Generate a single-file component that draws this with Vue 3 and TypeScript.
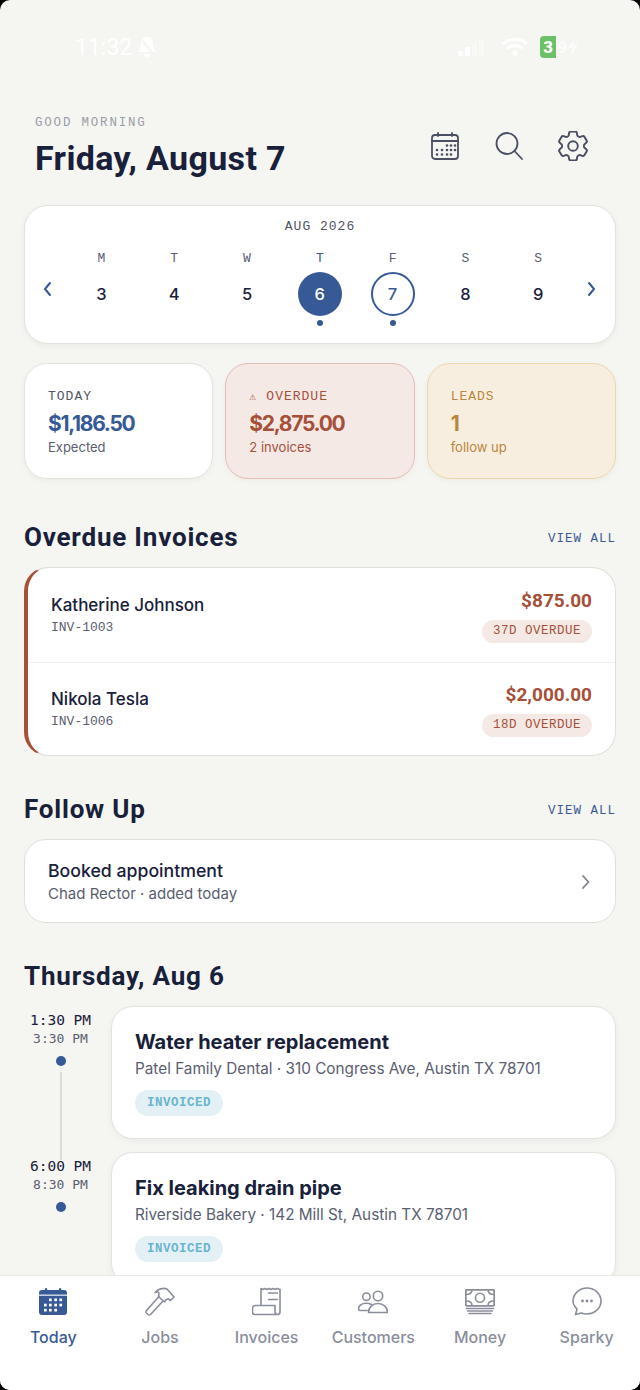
<template>
  <div class="app">
    <main class="main">
      <div class="status">
        <div class="status__left">
          <span class="status__time">11:32</span>
          <svg width="22" height="24" viewBox="0 0 22 24" fill="#fff"><path d="M11 2c-4 0-6 3-6 7 0 4-2 6-3 8h18c-1-2-3-4-3-8 0-4-2-7-6-7zM8 19a3 3 0 0 0 6 0z" /><path d="M3 2l17 20" stroke="#f5f5f1" stroke-width="2" /></svg>
        </div>
        <div class="status__right">
          <span class="signal"><i style="height: 5px"></i><i style="height: 9px"></i><i class="signal__off" style="height: 13px"></i><i class="signal__off" style="height: 17px"></i></span>
          <svg width="28" height="20" viewBox="0 0 28 20" fill="none" stroke="#fff" stroke-width="3"><path d="M2 7c7-6 17-6 24 0M6.500 11.500c4.500-4 10.500-4 15 0" /><circle cx="14" cy="16" r="2.500" fill="#fff" stroke="none" /></svg>
          <span class="battery">
            <b>3</b><span>9</span>
            <svg width="10" height="16" viewBox="0 0 10 16" fill="#fff" opacity="0.7"><path d="M6 0L0 9h4l-1 7 7-10H5.500z" /></svg>
          </span>
        </div>
      </div>

      <header class="top">
        <div>
          <div class="top__hello">GOOD MORNING</div>
          <h1 class="top__date">Friday, August 7</h1>
        </div>
        <div class="top__icons">
          <svg width="30" height="30" viewBox="0 0 30 30" fill="none" stroke="#4a4f63" stroke-width="1.800" stroke-linecap="round">
            <rect x="2" y="4" width="26" height="24" rx="3" />
            <path d="M2 10h26M8 2v3M22 2v3" />
            <g fill="#4a4f63" stroke="none">
              <circle cx="17" cy="14.500" r="1.300" /><circle cx="21" cy="14.500" r="1.300" /><circle cx="25" cy="14.500" r="1.300" />
              <circle cx="7" cy="19" r="1.300" /><circle cx="12" cy="19" r="1.300" /><circle cx="17" cy="19" r="1.300" /><circle cx="21" cy="19" r="1.300" /><circle cx="25" cy="19" r="1.300" />
              <circle cx="7" cy="23.500" r="1.300" /><circle cx="12" cy="23.500" r="1.300" /><circle cx="17" cy="23.500" r="1.300" /><circle cx="21" cy="23.500" r="1.300" />
            </g>
          </svg>
          <svg width="30" height="30" viewBox="0 0 30 30" fill="none" stroke="#4a4f63" stroke-width="1.800" stroke-linecap="round"><circle cx="13" cy="12.500" r="10.500" /><path d="M20.500 20l7.500 8" /></svg>
          <svg width="30" height="30" viewBox="2.700 2.700 18.600 18.600" fill="none" stroke="#4a4f63" stroke-width="1.200" stroke-linecap="round" stroke-linejoin="round"><path d="M9.594 3.940c.09-.542.560-.94 1.110-.94h2.593c.550 0 1.020.398 1.110.940l.213 1.281c.063.374.313.686.645.870.074.040.147.083.220.127.325.196.720.257 1.075.124l1.217-.456a1.125 1.125 0 0 1 1.370.490l1.296 2.247a1.125 1.125 0 0 1-.260 1.431l-1.003.827c-.293.241-.438.613-.430.992a7.723 7.723 0 0 1 0 .255c-.008.378.137.750.430.991l1.004.827c.424.350.534.955.260 1.430l-1.298 2.247a1.125 1.125 0 0 1-1.369.491l-1.217-.456c-.355-.133-.750-.072-1.076.124a6.470 6.470 0 0 1-.220.128c-.331.183-.581.495-.644.869l-.213 1.281c-.090.543-.560.940-1.110.940h-2.594c-.550 0-1.019-.398-1.110-.940l-.213-1.281c-.062-.374-.312-.686-.644-.870a6.520 6.520 0 0 1-.220-.127c-.325-.196-.720-.257-1.076-.124l-1.217.456a1.125 1.125 0 0 1-1.369-.490l-1.297-2.247a1.125 1.125 0 0 1 .260-1.431l1.004-.827c.292-.240.437-.613.430-.991a6.932 6.932 0 0 1 0-.255c.007-.380-.138-.751-.430-.992l-1.004-.827a1.125 1.125 0 0 1-.260-1.430l1.297-2.247a1.125 1.125 0 0 1 1.370-.491l1.216.456c.356.133.751.072 1.076-.124.072-.044.146-.086.220-.128.332-.183.582-.495.644-.869l.214-1.280Z" /><circle cx="12" cy="12" r="3" /></svg>
        </div>
      </header>

      <section class="cal">
        <div class="cal__month">AUG 2026</div>
        <div class="cal__body">
          <svg class="cal__arrow" width="10" height="16" viewBox="0 0 10 16" fill="none" stroke="#375a96" stroke-width="2" stroke-linecap="round" stroke-linejoin="round"><path d="M8 2L3 8l5 6" /></svg>
          <div class="cal__days">
            <div v-for="day in days" :key="day.num" class="day">
              <span class="day__name" :class="{ 'day__name--on': day.num === 6 }">{{ day.name }}</span>
              <span class="day__num" :class="{ 'day__num--today': day.num === 6, 'day__num--sel': day.num === 7 }">{{ day.num }}</span>
              <i class="day__dot" :class="{ 'day__dot--on': day.dot }"></i>
            </div>
          </div>
          <svg class="cal__arrow" width="10" height="16" viewBox="0 0 10 16" fill="none" stroke="#375a96" stroke-width="2" stroke-linecap="round" stroke-linejoin="round"><path d="M2 2l5 6-5 6" /></svg>
        </div>
      </section>

      <section class="stats">
        <div class="stat">
          <div class="stat__label stat__label--plain">TODAY</div>
          <div class="stat__value stat__value--blue">$1,186.50</div>
          <div class="stat__sub">Expected</div>
        </div>
        <div class="stat stat--red">
          <div class="stat__label"><span class="stat__warn">⚠</span>OVERDUE</div>
          <div class="stat__value">$2,875.00</div>
          <div class="stat__sub">2 invoices</div>
        </div>
        <div class="stat stat--amber">
          <div class="stat__label">LEADS</div>
          <div class="stat__value">1</div>
          <div class="stat__sub">follow up</div>
        </div>
      </section>

      <div class="head head--first">
        <h2>Overdue Invoices</h2>
        <span class="head__link">VIEW ALL</span>
      </div>
      <section class="invoices">
        <div v-for="inv in invoices" :key="inv.id" class="invoice">
          <div>
            <div class="invoice__name">{{ inv.name }}</div>
            <div class="invoice__id">{{ inv.id }}</div>
          </div>
          <div class="invoice__right">
            <div class="invoice__amount">{{ inv.amount }}</div>
            <span class="invoice__chip">{{ inv.late }}</span>
          </div>
        </div>
      </section>

      <div class="head head--follow">
        <h2>Follow Up</h2>
        <span class="head__link">VIEW ALL</span>
      </div>
      <section class="follow">
        <div class="follow__text">
          <div class="follow__title">Booked appointment</div>
          <div class="follow__sub">Chad Rector · added today</div>
        </div>
        <svg class="follow__arrow" width="10" height="16" viewBox="0 0 10 16" fill="none" stroke="#7f8290" stroke-width="1.800" stroke-linecap="round" stroke-linejoin="round"><path d="M2 2l5.500 6L2 14" /></svg>
      </section>

      <div class="head head--day"><h2>Thursday, Aug 6</h2></div>
      <section class="jobs">
        <div v-for="(job, i) in jobs" :key="job.title" class="job">
          <div class="job__time">
            <div class="job__start">{{ job.start }}</div>
            <div class="job__end">{{ job.end }}</div>
            <i class="job__dot"></i>
            <i v-if="i < jobs.length - 1" class="job__line"></i>
          </div>
          <div class="job__card">
            <div class="job__title">{{ job.title }}</div>
            <div class="job__sub">{{ job.place }}</div>
            <span class="job__chip">INVOICED</span>
          </div>
        </div>
      </section>
    </main>

    <nav class="tabs">
      <div v-for="tab in tabs" :key="tab" class="tab" :class="{ 'tab--on': tab === 'Today' }">
        <svg width="30" height="30" viewBox="0 0 30 30" fill="none" stroke="#8a8e9c" stroke-width="1.600" stroke-linecap="round" stroke-linejoin="round">
          <g v-if="tab === 'Today'" stroke="none">
            <rect x="1" y="3" width="28" height="25" rx="3" fill="#375a96" />
            <rect x="7" y="1" width="2.200" height="4.500" rx="1.100" fill="#375a96" />
            <rect x="21" y="1" width="2.200" height="4.500" rx="1.100" fill="#375a96" />
            <rect x="1" y="7.600" width="28" height="1.100" fill="#fff" />
            <g fill="#fff">
              <rect x="11" y="11.500" width="2.700" height="2.700" /><rect x="16.300" y="11.500" width="2.700" height="2.700" /><rect x="21.400" y="11.500" width="2.700" height="2.700" />
              <rect x="6" y="16.700" width="2.700" height="2.700" /><rect x="11" y="16.700" width="2.700" height="2.700" /><rect x="16.300" y="16.700" width="2.700" height="2.700" /><rect x="21.400" y="16.700" width="2.700" height="2.700" />
              <rect x="6" y="21.800" width="2.700" height="2.700" /><rect x="11" y="21.800" width="2.700" height="2.700" /><rect x="16.300" y="21.800" width="2.700" height="2.700" />
            </g>
          </g>
          <g v-else-if="tab === 'Jobs'">
            <path d="M14 9.500L1.500 23.500a2 2 0 0 0 0 2.500L3 27.500a2 2 0 0 0 2.500 0L18 14" />
            <path d="M10 5.500C13 2 18 .5 22 2l7 8-3.500 3.500-2-1.500-2.500.8-1.500 2.200-6-5.500.5-3C14 5 12 4.500 10 5.500z" />
          </g>
          <g v-else-if="tab === 'Invoices'">
            <path d="M9 18.500V1.500l2 1 2-1 2 1 2-1 2 1 2-1 2 1 2-1 3 1V25a2.500 2.500 0 0 1-5 0v-6.500H3.500a3 3 0 0 0-3 3V25A2.500 2.500 0 0 0 3 27.500h23.500" />
            <path d="M16.500 6h9M16.500 12.500h9" />
          </g>
          <g v-else-if="tab === 'Customers'">
            <circle cx="8.400" cy="9.700" r="3.700" />
            <circle cx="20" cy="9" r="4.700" />
            <path d="M13.500 17.500c-1.500-.7-3.500-1.200-5.500-1.200-4 0-7.500 2.500-7.500 5.500 0 1 .7 1.700 1.700 1.700h7" />
            <path d="M10.500 25.500c0-5 4-9 9.500-9s9.500 4 9.500 9z" />
          </g>
          <g v-else-if="tab === 'Money'">
            <rect x="0.800" y="2.800" width="28.400" height="16" rx="1" stroke-width="1.800" />
            <circle cx="15" cy="10.800" r="4.500" />
            <path d="M7 3c0 3-2 4.500-6 4.500M23 3c0 3 2 4.500 6 4.500M7 18.500c0-3-2-4.500-6-4.500M23 18.500c0-3 2-4.500 6-4.500" />
            <path d="M1.500 21.500h27M2.500 24h25M4 26.500h22" />
          </g>
          <g v-else>
            <path d="M15 1c7.700 0 14 5.800 14 13s-6.300 13-14 13c-2 0-4-.4-5.800-1.100L3.500 27.500 5 22C2.500 19.600 1 17 1 14 1 6.800 7.300 1 15 1z" />
            <g fill="#8a8e9c" stroke="none"><circle cx="10.500" cy="14" r="1.400" /><circle cx="15" cy="14" r="1.400" /><circle cx="19.500" cy="14" r="1.400" /></g>
          </g>
        </svg>
        <span>{{ tab }}</span>
      </div>
    </nav>
  </div>
</template>

<script setup lang="ts">
const days = [
  { name: 'M', num: 3, dot: false },
  { name: 'T', num: 4, dot: false },
  { name: 'W', num: 5, dot: false },
  { name: 'T', num: 6, dot: true },
  { name: 'F', num: 7, dot: true },
  { name: 'S', num: 8, dot: false },
  { name: 'S', num: 9, dot: false }
];

const invoices = [
  { name: 'Katherine Johnson', id: 'INV-1003', amount: '$875.00', late: '37D OVERDUE' },
  { name: 'Nikola Tesla', id: 'INV-1006', amount: '$2,000.00', late: '18D OVERDUE' }
];

const jobs = [
  {
    start: '1:30 PM',
    end: '3:30 PM',
    title: 'Water heater replacement',
    place: 'Patel Family Dental · 310 Congress Ave, Austin TX 78701'
  },
  {
    start: '6:00 PM',
    end: '8:30 PM',
    title: 'Fix leaking drain pipe',
    place: 'Riverside Bakery · 142 Mill St, Austin TX 78701'
  }
];

const tabs = ['Today', 'Jobs', 'Invoices', 'Customers', 'Money', 'Sparky'];
</script>

<style>
html,
body {
  margin: 0;
  background: #000;
}
</style>

<style scoped>
.app {
  width: 640px;
  height: 1390px;
  display: flex;
  flex-direction: column;
  overflow: hidden;
  border-radius: 10px;
  background: #f5f5f1;
  color: #18203a;
  font-family: 'Inter', 'Noto Sans', sans-serif;
}

.main {
  flex: 1;
  min-height: 0;
  overflow: hidden;
  padding: 0 24px;
}

.status {
  height: 94px;
  box-sizing: border-box;
  padding: 34px 38px 0 51px;
  display: flex;
  justify-content: space-between;
  align-items: flex-start;
  color: #fff;
  filter: blur(0.7px);
}

.status__left,
.status__right {
  display: flex;
  align-items: center;
  height: 26px;
}

.status__left {
  gap: 4px;
}

.status__right {
  gap: 17px;
}

.status__time {
  font-size: 23px;
  font-family: 'Roboto', sans-serif;
}

.signal {
  display: flex;
  align-items: flex-end;
  gap: 2px;
}

.signal i {
  width: 5px;
  background: #fff;
  border-radius: 1px;
}

.signal .signal__off {
  opacity: 0.4;
}

.battery {
  display: flex;
  align-items: center;
  font: 700 17px 'Roboto', sans-serif;
  margin-left: -6px;
}

.battery b {
  width: 16px;
  height: 22px;
  line-height: 22px;
  text-align: center;
  background: #6cc067;
  border-radius: 4px 0 0 4px;
}

.battery span {
  opacity: 0.7;
  margin: 0 1px;
}

.top {
  display: flex;
  justify-content: space-between;
  align-items: flex-start;
  padding: 0 28px 0 11px;
}

.top__hello {
  margin-top: 21px;
  font: 12.500px/16px 'Liberation Mono', monospace;
  letter-spacing: 1.800px;
  color: #9a9da9;
}

.top__date {
  margin: 6px 0 0;
  font: 700 34px/42px 'Roboto', sans-serif;
  letter-spacing: 0.350px;
  color: #18203a;
}

.top__icons {
  display: flex;
  gap: 34px;
  margin-top: 37px;
}

.cal {
  height: 139px;
  box-sizing: border-box;
  margin-top: 26px;
  background: #fff;
  border: 1px solid #e3e3de;
  border-radius: 24px;
  box-shadow: 0 2px 6px rgba(40, 40, 30, 0.05);
  padding-top: 13px;
}

.cal__month {
  text-align: center;
  font: 13px/16px 'Liberation Mono', monospace;
  letter-spacing: 1px;
  color: #4f5366;
}

.cal__body {
  display: flex;
  align-items: flex-start;
  padding: 0 18px 0 17px;
  margin-top: 16px;
}

.cal__arrow {
  margin-top: 30px;
  flex: none;
}

.cal__days {
  flex: 1;
  margin: 0 3px 0 13px;
  display: grid;
  grid-template-columns: repeat(7, 72.8px);
}

.day {
  display: flex;
  flex-direction: column;
  align-items: center;
}

.day__name {
  font: 13px/16px 'Liberation Mono', monospace;
  color: #5a5e70;
}

.day__name--on {
  color: #375a96;
}

.day__num {
  margin-top: 5px;
  width: 44px;
  height: 44px;
  box-sizing: border-box;
  border-radius: 50%;
  display: flex;
  align-items: center;
  justify-content: center;
  font-size: 16.500px;
  font-weight: 500;
}

.day__num--today {
  background: #375a96;
  color: #fff;
}

.day__num--sel {
  border: 2px solid #375a96;
  color: #375a96;
}

.day__dot {
  margin-top: 4px;
  width: 6px;
  height: 6px;
  border-radius: 50%;
}

.day__dot--on {
  background: #375a96;
}

.stats {
  margin-top: 19px;
  display: grid;
  grid-template-columns: repeat(3, 1fr);
  gap: 12px;
}

.stat {
  height: 116px;
  box-sizing: border-box;
  padding: 25px 23px 0;
  background: #fff;
  border: 1px solid #e3e3de;
  border-radius: 23px;
  box-shadow: 0 2px 6px rgba(40, 40, 30, 0.04);
}

.stat--red {
  background: #f5e9e6;
  border-color: #e6bdb6;
  color: #a6503a;
}

.stat--amber {
  background: #f8eee0;
  border-color: #ecd7ac;
  color: #b8863c;
}

.stat__label {
  font: 13px/16px 'Liberation Mono', monospace;
  letter-spacing: 1px;
}

.stat__label--plain {
  color: #4f5366;
}

.stat__warn {
  display: inline-block;
  width: 17px;
  font-size: 11px;
  letter-spacing: 0;
}

.stat__value {
  margin-top: 6px;
  font: 700 21px/26px 'Inter', sans-serif;
  letter-spacing: -1.300px;
}

.stat__value--blue {
  color: #375a96;
}

.stat__sub {
  margin-top: 1px;
  font-size: 13px;
  line-height: 18px;
}

.stat:first-child .stat__sub {
  color: #5a5e70;
}

.head {
  display: flex;
  justify-content: space-between;
  align-items: center;
  height: 34px;
}

.head h2 {
  margin: 0;
  font: 700 26px/34px 'Roboto', sans-serif;
  letter-spacing: 0.800px;
  color: #18203a;
}

.head--first {
  margin-top: 41px;
}

.head--follow {
  margin-top: 36px;
}

.head--day {
  margin-top: 36px;
}

.head__link {
  margin-top: 4px;
  font: 12.500px/16px 'Liberation Mono', monospace;
  letter-spacing: 1px;
  color: #375a96;
}

.invoices {
  margin-top: 13px;
  height: 189px;
  box-sizing: border-box;
  background: #fff;
  border: 1px solid #e0e0db;
  border-left: 4.500px solid #a6503a;
  border-radius: 24px;
}

.invoice {
  height: 93.500px;
  box-sizing: border-box;
  padding: 0 23px;
  display: flex;
  justify-content: space-between;
  align-items: center;
}

.invoice + .invoice {
  border-top: 1px solid #f0f0ec;
}

.invoice__name {
  font-size: 17px;
  line-height: 24px;
  font-weight: 500;
  margin-top: -1px;
}

.invoice__id {
  font: 13px/16px 'Liberation Mono', monospace;
  color: #5a5e70;
  margin-top: 3px;
}

.invoice__right {
  display: flex;
  flex-direction: column;
  align-items: flex-end;
  gap: 7px;
  margin-top: 2px;
}

.invoice__amount {
  font: 700 19px/24px 'Roboto', sans-serif;
  color: #a6503a;
}

.invoice__chip {
  height: 23px;
  padding: 0 11px;
  border-radius: 12px;
  background: #f5e9e6;
  color: #a6503a;
  font: 12.500px/23px 'Liberation Mono', monospace;
  letter-spacing: 0.500px;
}

.follow {
  margin-top: 13px;
  height: 84px;
  box-sizing: border-box;
  background: #fff;
  border: 1px solid #e0e0db;
  border-radius: 22px;
  padding: 0 24px 0 23px;
  display: flex;
  justify-content: space-between;
  align-items: center;
}

.follow__text {
  margin-top: 2px;
}

.follow__title {
  font-size: 17.700px;
  line-height: 22px;
  font-weight: 500;
}

.follow__sub {
  margin-top: 2px;
  font-size: 15px;
  line-height: 20px;
  color: #5a5e70;
}

.follow__arrow {
  margin-top: 2px;
}

.jobs {
  margin-top: 13px;
  display: flex;
  flex-direction: column;
  gap: 13px;
}

.job {
  display: flex;
  gap: 14px;
}

.job__time {
  position: relative;
  width: 73px;
  flex: none;
  display: flex;
  flex-direction: column;
  align-items: center;
  padding-top: 5px;
}

.job__start {
  font: 14.500px/18px 'DejaVu Sans Mono', monospace;
  color: #18203a;
}

.job__end {
  margin-top: 1px;
  font: 13px/18px 'DejaVu Sans Mono', monospace;
  color: #5a5e70;
}

.job__dot {
  margin-top: 8px;
  width: 10px;
  height: 10px;
  border-radius: 50%;
  background: #375a96;
}

.job__line {
  position: absolute;
  left: 36px;
  top: 66px;
  width: 2px;
  height: 88px;
  background: #dcdcd7;
}

.job__card {
  flex: 1;
  height: 133px;
  box-sizing: border-box;
  padding: 21px 23px 0;
  background: #fff;
  border: 1px solid #e3e3de;
  border-radius: 22px;
  box-shadow: 0 2px 6px rgba(40, 40, 30, 0.05);
}

.job__title {
  font-size: 20px;
  line-height: 28px;
  font-weight: 700;
}

.job__sub {
  margin-top: 3px;
  font-size: 15.300px;
  line-height: 20px;
  color: #5a5e70;
  white-space: nowrap;
}

.job__chip {
  display: inline-block;
  margin-top: 11px;
  height: 26px;
  padding: 0 12px;
  border-radius: 13px;
  background: #e3f1f6;
  color: #6bb4cf;
  font: 700 12.500px/26px 'Liberation Mono', monospace;
  letter-spacing: 0.500px;
}

.tabs {
  flex: none;
  height: 115px;
  box-sizing: border-box;
  display: grid;
  grid-template-columns: repeat(6, 1fr);
  background: #fff;
  border-top: 1px solid #e8e8e5;
  padding-top: 11px;
}

.tab {
  display: flex;
  flex-direction: column;
  align-items: center;
  gap: 10px;
  color: #8a8e9c;
  font-size: 16px;
  line-height: 20px;
  font-weight: 500;
}

.tab--on {
  color: #375a96;
}
</style>
